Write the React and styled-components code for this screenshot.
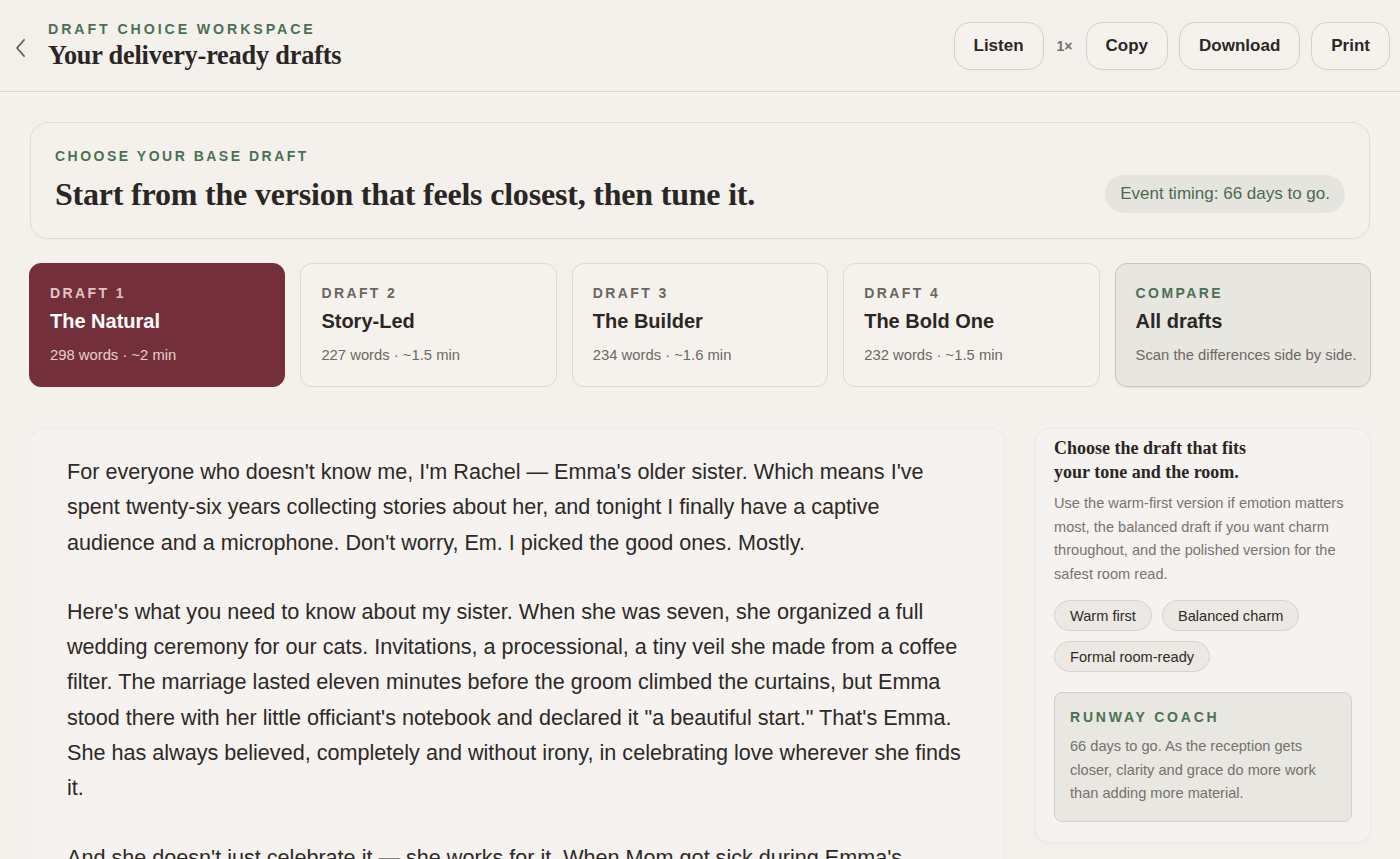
import React from "react";
import styled, { createGlobalStyle } from "styled-components";

const Global = createGlobalStyle`
  html, body { margin: 0; padding: 0; background: #f4f1ed; }
  body { font-family: "Liberation Sans", Arial, sans-serif; color: #2b2724; }
  * { box-sizing: border-box; }
`;

const serif = `"Liberation Serif", "Times New Roman", serif`;

const Page = styled.div`
  min-height: 859px;
  background: #f4f1ed;
`;

const Header = styled.header`
  height: 92px;
  display: flex;
  align-items: center;
  justify-content: space-between;
  padding: 0 10px 0 13px;
  border-bottom: 1px solid #dcd7d1;
`;

const TitleGroup = styled.div`
  display: flex;
  align-items: center;
  gap: 19px;
`;

const BackButton = styled.button`
  border: none;
  background: none;
  padding: 0;
  display: flex;
  color: #5e5955;
  cursor: pointer;
  margin-top: 4px;
`;

const Eyebrow = styled.div`
  font-size: ${(p) => p.size || 14}px;
  font-weight: 700;
  letter-spacing: ${(p) => p.spacing || 2.7}px;
  text-transform: uppercase;
  white-space: nowrap;
  color: ${(p) => p.color || "#4b7155"};
`;

const PageTitle = styled.h1`
  margin: 4px 0 0;
  font-family: ${serif};
  font-size: 26.3px;
  font-weight: 700;
  color: #2a2623;
  letter-spacing: -0.2px;
`;

const Actions = styled.div`
  display: flex;
  align-items: center;
  gap: 11px;
`;

const ActionButton = styled.button`
  height: 48px;
  padding: 0 19px;
  border: 1px solid #d6d0ca;
  border-radius: 16px;
  background: #f5f2ee;
  font-family: "Liberation Sans", Arial, sans-serif;
  font-size: 17px;
  font-weight: 700;
  color: #2b2724;
  cursor: pointer;
`;

const Speed = styled.span`
  font-size: 14px;
  font-weight: 700;
  color: #77716c;
  margin: 0 2px;
`;

const Main = styled.main`
  padding: 30px 29px 0 29px;
  display: flex;
  flex-direction: column;
`;

const Hero = styled.section`
  margin: 0 1px;
  height: 117px;
  border: 1px solid #e1dcd6;
  border-radius: 18px;
  padding: 0 24px 24px 24px;
  display: flex;
  align-items: flex-end;
  justify-content: space-between;
  box-shadow: 0 1px 2px rgba(0, 0, 0, 0.03);
`;

const HeroText = styled.div`
  display: flex;
  flex-direction: column;
  gap: 10px;
`;

const HeroTitle = styled.h2`
  margin: 0;
  font-family: ${serif};
  font-size: 32px;
  font-weight: 700;
  color: #2a2623;
  line-height: 40px;
  letter-spacing: -0.2px;
`;

const Pill = styled.div`
  height: 38px;
  padding: 0 15px;
  border-radius: 19px;
  background: #e6e4de;
  color: #4c6a52;
  font-size: 17px;
  display: flex;
  align-items: center;
  margin-bottom: 1px;
`;

const Cards = styled.div`
  margin-top: 24px;
  display: grid;
  grid-template-columns: repeat(5, 1fr);
  gap: 15px;
`;

const Card = styled.button`
  height: 124px;
  text-align: left;
  padding: 21px 12px 0 20px;
  border-radius: 12px;
  cursor: pointer;
  font-family: "Liberation Sans", Arial, sans-serif;
  display: flex;
  flex-direction: column;
  border: 1px solid
    ${(p) => (p.variant === "active" ? "#74303a" : p.variant === "compare" ? "#c6c8bf" : "#dfd9d3")};
  background: ${(p) => (p.variant === "active" ? "#74303a" : p.variant === "compare" ? "#e7e6e0" : "#f5f2ee")};
  box-shadow: ${(p) => (p.variant === "compare" ? "0 1px 2px rgba(0,0,0,0.06)" : "none")};
`;

const CardTitle = styled.div`
  margin-top: 9px;
  font-size: 20px;
  font-weight: 700;
  color: ${(p) => (p.light ? "#ffffff" : "#2b2724")};
`;

const CardMeta = styled.div`
  margin-top: 14px;
  font-size: 14.8px;
  white-space: nowrap;
  color: ${(p) => (p.light ? "#e6cfd1" : "#6e6863")};
`;

const Workspace = styled.div`
  margin-top: 41px;
  display: grid;
  grid-template-columns: 976px 1fr;
  gap: 30px;
  align-items: start;
`;

const Reader = styled.article`
  margin-left: 1px;
  border: 1px solid #eeeae5;
  border-bottom: none;
  border-radius: 14px 14px 0 0;
  background: #f5f2ef;
  padding: 25px 32px 0 36px;
  min-height: 440px;
`;

const Paragraph = styled.p`
  margin: 0 0 34px;
  font-size: 21.6px;
  line-height: 35.3px;
  color: #2d2926;
`;

const Side = styled.aside`
  border: 1px solid #ece8e3;
  border-radius: 14px;
  padding: 7px 18px 20px 18px;
  background: #f5f2ef;
  box-shadow: 0 2px 4px rgba(0, 0, 0, 0.025);
`;

const SideTitle = styled.h3`
  margin: 0;
  font-family: ${serif};
  font-size: 18px;
  font-weight: 700;
  line-height: 24px;
  max-width: 210px;
  color: #2a2623;
`;

const SideText = styled.p`
  margin: 8px 0 0;
  font-size: 14.6px;
  line-height: 23.5px;
  color: #7a7470;
`;

const Chips = styled.div`
  margin-top: 14px;
  display: flex;
  flex-wrap: wrap;
  gap: 10px;
`;

const Chip = styled.button`
  height: 31px;
  padding: 0 15px;
  border-radius: 16px;
  border: 1px solid #d9d3cc;
  background: #ece8e3;
  font-family: "Liberation Sans", Arial, sans-serif;
  font-size: 14.6px;
  color: #2f2b28;
  cursor: pointer;
`;

const Coach = styled.div`
  margin-top: 20px;
  border: 1px solid #d2d2ca;
  border-radius: 8px;
  background: #e8e7e1;
  padding: 16px 15px 15px;
`;

const CoachText = styled.p`
  margin: 10px 0 0;
  font-size: 14.6px;
  line-height: 23.5px;
  color: #77716c;
`;

const drafts = [
  { label: "Draft 1", title: "The Natural", meta: "298 words · ~2 min", variant: "active" },
  { label: "Draft 2", title: "Story-Led", meta: "227 words · ~1.5 min" },
  { label: "Draft 3", title: "The Builder", meta: "234 words · ~1.6 min" },
  { label: "Draft 4", title: "The Bold One", meta: "232 words · ~1.5 min" },
  { label: "Compare", title: "All drafts", meta: "Scan the differences side by side.", variant: "compare" },
];

const paragraphs = [
  "For everyone who doesn't know me, I'm Rachel — Emma's older sister. Which means I've spent twenty-six years collecting stories about her, and tonight I finally have a captive audience and a microphone. Don't worry, Em. I picked the good ones. Mostly.",
  "Here's what you need to know about my sister. When she was seven, she organized a full wedding ceremony for our cats. Invitations, a processional, a tiny veil she made from a coffee filter. The marriage lasted eleven minutes before the groom climbed the curtains, but Emma stood there with her little officiant's notebook and declared it \"a beautiful start.\" That's Emma. She has always believed, completely and without irony, in celebrating love wherever she finds it.",
  "And she doesn't just celebrate it — she works for it. When Mom got sick during Emma's sophomore year, she drove home every weekend and kept the whole house running without once making it about herself.",
];

export default function App() {
  return (
    <Page>
      <Global />
      <Header>
        <TitleGroup>
          <BackButton aria-label="Back">
            <svg width="16" height="20" viewBox="0 0 16 20" fill="none">
              <path d="M11 2 L4 10 L11 18" stroke="currentColor" strokeWidth="1.8" strokeLinecap="round" strokeLinejoin="round" />
            </svg>
          </BackButton>
          <div>
            <Eyebrow size={14.2} spacing={2.9}>Draft choice workspace</Eyebrow>
            <PageTitle>Your delivery-ready drafts</PageTitle>
          </div>
        </TitleGroup>
        <Actions>
          <ActionButton>Listen</ActionButton>
          <Speed>1×</Speed>
          <ActionButton>Copy</ActionButton>
          <ActionButton>Download</ActionButton>
          <ActionButton>Print</ActionButton>
        </Actions>
      </Header>
      <Main>
        <Hero>
          <HeroText>
            <Eyebrow spacing={2.5}>Choose your base draft</Eyebrow>
            <HeroTitle>Start from the version that feels closest, then tune it.</HeroTitle>
          </HeroText>
          <Pill>Event timing: 66 days to go.</Pill>
        </Hero>
        <Cards>
          {drafts.map((d) => (
            <Card key={d.label} variant={d.variant}>
              <Eyebrow
                spacing={2.4}
                color={d.variant === "active" ? "#e2c3c7" : d.variant === "compare" ? "#4b7155" : "#6b6560"}
              >
                {d.label}
              </Eyebrow>
              <CardTitle light={d.variant === "active"}>{d.title}</CardTitle>
              <CardMeta light={d.variant === "active"}>{d.meta}</CardMeta>
            </Card>
          ))}
        </Cards>
        <Workspace>
          <Reader>
            {paragraphs.map((p, i) => (
              <Paragraph key={i}>{p}</Paragraph>
            ))}
          </Reader>
          <Side>
            <SideTitle>Choose the draft that fits your tone and the room.</SideTitle>
            <SideText>
              Use the warm-first version if emotion matters most, the balanced draft if you want charm throughout, and
              the polished version for the safest room read.
            </SideText>
            <Chips>
              <Chip>Warm first</Chip>
              <Chip>Balanced charm</Chip>
              <Chip>Formal room-ready</Chip>
            </Chips>
            <Coach>
              <Eyebrow spacing={2.8}>Runway coach</Eyebrow>
              <CoachText>
                66 days to go. As the reception gets closer, clarity and grace do more work than adding more material.
              </CoachText>
            </Coach>
          </Side>
        </Workspace>
      </Main>
    </Page>
  );
}
